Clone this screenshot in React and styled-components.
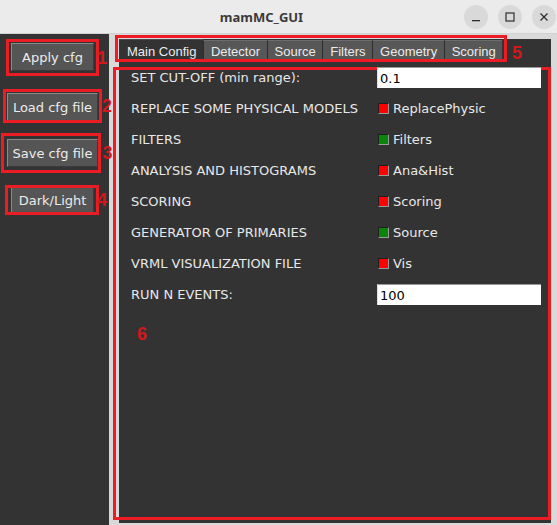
import React from "react";
import styled, { createGlobalStyle } from "styled-components";

const Global = createGlobalStyle`
  html, body { margin: 0; padding: 0; width: 557px; height: 525px; overflow: hidden; background: #d9d9d9; }
  body { font-family: "DejaVu Sans", sans-serif; }
  #root { width: 557px; height: 525px; }
  * { box-sizing: border-box; }
`;

const Window = styled.div`
  width: 557px;
  height: 525px;
  display: flex;
  flex-direction: column;
`;

const TitleBar = styled.div`
  flex: none;
  height: 34px;
  background: #ebebeb;
  border-bottom: 1px solid #d2d2d2;
  display: flex;
  align-items: center;
`;

const Title = styled.div`
  flex: 1;
  text-align: center;
  padding-left: 59px;
  font-family: "Noto Sans", sans-serif;
  font-weight: 700;
  font-size: 13px;
  color: #3a3a3a;
`;

const Controls = styled.div`
  display: flex;
  gap: 10px;
  padding-right: 1px;
`;

const CtrlButton = styled.div`
  width: 24px;
  height: 24px;
  border-radius: 50%;
  background: #d9d9d9;
  display: flex;
  align-items: center;
  justify-content: center;
  color: #2e2e2e;
`;

const Body = styled.div`
  flex: 1;
  display: flex;
  min-height: 0;
`;

const Sidebar = styled.div`
  width: 109px;
  flex: none;
  background: #333333;
  display: flex;
  flex-direction: column;
  align-items: center;
  padding: 9px 4px 0 0;
`;

const Marked = styled.div`
  position: relative;
  margin-top: ${(p) => p.$mt || 0}px;
`;

const Button = styled.div`
  height: 28px;
  min-width: 83px;
  padding: 0 5px;
  background: #555555;
  border-top: 1px solid #8a8a8a;
  border-left: 1px solid #8a8a8a;
  border-right: 1px solid #3a3a3a;
  border-bottom: 1px solid #3a3a3a;
  color: #ececec;
  font-size: 13px;
  display: flex;
  align-items: center;
  justify-content: center;
  white-space: nowrap;
`;

const Annot = styled.div`
  position: absolute;
  top: ${(p) => p.$t}px;
  right: ${(p) => p.$r}px;
  bottom: ${(p) => p.$b}px;
  left: ${(p) => p.$l}px;
  border: 3px solid #ec1c24;
  pointer-events: none;
  z-index: 1;
`;

const Digit = styled.span`
  position: absolute;
  left: calc(100% + ${(p) => p.$dx || 0}px);
  top: ${(p) => (p.$dy !== undefined ? `${p.$dy}px` : "50%")};
  transform: ${(p) => (p.$dy !== undefined ? "none" : "translateY(-50%)")};
  font-family: "Liberation Sans", sans-serif;
  font-weight: 700;
  font-size: 18px;
  line-height: 18px;
  color: #d2171d;
`;

const InnerDigit = styled(Digit)`
  left: ${(p) => p.$x}px;
`;

const RightPane = styled.div`
  flex: 1;
  position: relative;
  background: #d9d9d9;
  padding: 5px 6px 2px 10px;
  display: flex;
  flex-direction: column;
`;

const Notebook = styled.div`
  flex: 1;
  display: flex;
  flex-direction: column;
  background: #333333;
`;

const TabBar = styled.div`
  height: 23px;
  display: flex;
  align-items: flex-end;
`;

const Tab = styled.div`
  height: ${(p) => (p.$active ? 23 : 22)}px;
  padding: 0 6.5px 0 7px;
  background: ${(p) => (p.$active ? "#333333" : "#575757")};
  border-left: 1px solid ${(p) => (p.$active ? "#333333" : "#2c2c2c")};
  border-top: 1px solid ${(p) => (p.$active ? "#4a4a4a" : "#6c6c6c")};
  color: #ebebeb;
  font-family: "Liberation Sans", sans-serif;
  font-size: 13px;
  display: flex;
  align-items: center;
  white-space: nowrap;
`;

const Page = styled.div`
  flex: 1;
  display: grid;
  grid-template-columns: 246px 164px;
  grid-auto-rows: 31px;
  align-content: start;
  align-items: center;
  padding-left: 12px;
`;

const Label = styled.div`
  color: #e8e8e8;
  font-size: 13px;
  white-space: nowrap;
`;

const Entry = styled.div`
  position: relative;
  z-index: 2;
  height: 21px;
  background: #ffffff;
  border-top: 1px solid #9a9a9a;
  border-left: 1px solid #e0e0e0;
  color: #000;
  font-size: 13px;
  padding-left: 2px;
  display: flex;
  align-items: center;
`;

const Check = styled.div`
  display: flex;
  align-items: center;
  gap: 4px;
  padding-left: 1px;
  color: #e8e8e8;
  font-size: 13px;
`;

const Square = styled.span`
  width: 11px;
  height: 11px;
  background: ${(p) => (p.$on ? "#0a840a" : "#ff0000")};
  border-top: 1px solid #1e1e1e;
  border-left: 1px solid #1e1e1e;
  border-right: 1px solid #9a9a9a;
  border-bottom: 1px solid #9a9a9a;
`;

const Box = styled.div`
  position: absolute;
  left: ${(p) => p.$x}px;
  top: ${(p) => p.$y}px;
  width: ${(p) => p.$w}px;
  height: ${(p) => p.$h}px;
  border: 3px solid #ec1c24;
  pointer-events: none;
  z-index: 1;
`;

const sideButtons = [
  { text: "Apply cfg", mt: 0, a: [-4, -5, -5, -5], d: "1", dx: 1 },
  { text: "Load cfg file", mt: 22, a: [-4, -4, -2, -4], d: "2", dx: 3 },
  { text: "Save cfg file", mt: 18, a: [-6, -3, -6, -6], d: "3", dx: 4 },
  { text: "Dark/Light", mt: 19, a: [-1, -5, -1, -6], d: "4", dx: 1 },
];

const tabs = ["Main Config", "Detector", "Source", "Filters", "Geometry", "Scoring"];

const rows = [
  { label: "SET CUT-OFF (min range):", entry: "0.1" },
  { label: "REPLACE SOME PHYSICAL MODELS", check: "ReplacePhysic", on: false },
  { label: "FILTERS", check: "Filters", on: true },
  { label: "ANALYSIS AND HISTOGRAMS", check: "Ana&Hist", on: false },
  { label: "SCORING", check: "Scoring", on: false },
  { label: "GENERATOR OF PRIMARIES", check: "Source", on: true },
  { label: "VRML VISUALIZATION FILE", check: "Vis", on: false },
  { label: "RUN N EVENTS:", entry: "100" },
];

export default function App() {
  return (
    <Window>
      <Global />
      <TitleBar>
        <Title>mamMC_GUI</Title>
        <Controls>
          <CtrlButton>
            <svg width="10" height="10" viewBox="0 0 10 10">
              <rect x="1" y="8" width="8" height="1.3" fill="currentColor" />
            </svg>
          </CtrlButton>
          <CtrlButton>
            <svg width="10" height="10" viewBox="0 0 10 10">
              <rect x="1" y="1" width="8" height="8" fill="none" stroke="currentColor" strokeWidth="1.2" />
            </svg>
          </CtrlButton>
          <CtrlButton>
            <svg width="10" height="10" viewBox="0 0 10 10">
              <path d="M1.5 1.5 L8.5 8.5 M8.5 1.5 L1.5 8.5" stroke="currentColor" strokeWidth="1.3" />
            </svg>
          </CtrlButton>
        </Controls>
      </TitleBar>
      <Body>
        <Sidebar>
          {sideButtons.map((b) => (
            <Marked key={b.text} $mt={b.mt}>
              <Button>{b.text}</Button>
              <Annot $t={b.a[0]} $r={b.a[1]} $b={b.a[2]} $l={b.a[3]}>
                <Digit $dx={b.dx}>{b.d}</Digit>
              </Annot>
            </Marked>
          ))}
        </Sidebar>
        <RightPane>
          <Notebook>
            <TabBar>
              {tabs.map((t, i) => (
                <Tab key={t} $active={i === 0}>{t}</Tab>
              ))}
            </TabBar>
            <Page>
              {rows.map((r) => (
                <React.Fragment key={r.label}>
                  <Label>{r.label}</Label>
                  {r.entry ? (
                    <Entry>{r.entry}</Entry>
                  ) : (
                    <Check>
                      <Square $on={r.on} />
                      <span>{r.check}</span>
                    </Check>
                  )}
                </React.Fragment>
              ))}
            </Page>
          </Notebook>
          <Box $x={6} $y={1} $w={392} $h={27}>
            <Digit $dx={8} $dy={6}>5</Digit>
          </Box>
          <Box $x={4} $y={33} $w={438} $h={453}>
            <InnerDigit $x={21} $dy={255}>6</InnerDigit>
          </Box>
        </RightPane>
      </Body>
    </Window>
  );
}
